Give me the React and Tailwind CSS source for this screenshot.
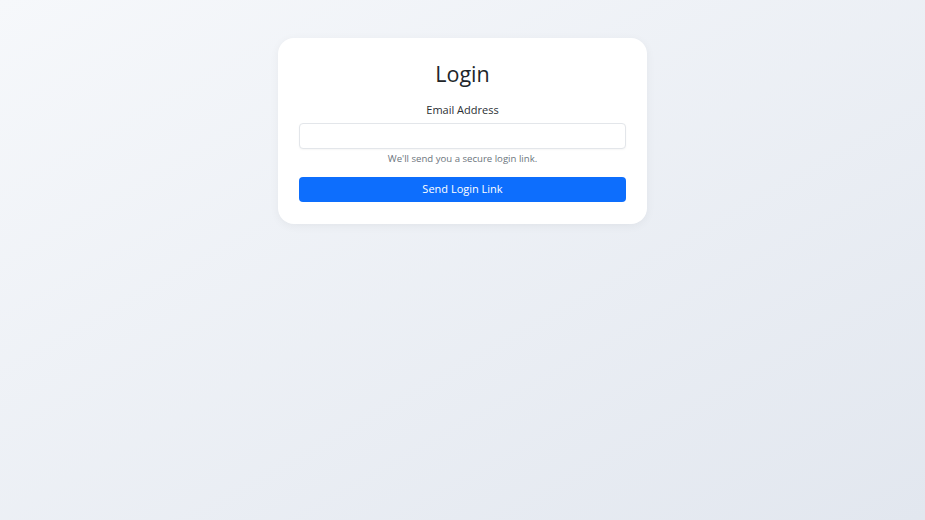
import React from 'react'

const App = () => {
  return (
    <div className="min-h-[520px] w-full bg-gradient-to-br from-[#f6f8fb] to-[#e2e7ef] font-['Open_Sans',sans-serif] pt-[38px]">
      <div className="mx-auto w-[369px] rounded-2xl bg-white px-[21px] pt-[22px] pb-[22px] shadow-[0_2px_10px_rgba(0,0,0,0.05)]">
        {/* Title */}
        <h1 className="text-center text-[21.5px] leading-[27px] text-[#212529]">Login</h1>

        <form onSubmit={(e) => e.preventDefault()} className="mt-[14px] flex flex-col">
          <label htmlFor="email" className="text-center text-[11px] leading-[17px] text-[#2b2f33]">
            Email Address
          </label>
          <input
            id="email"
            type="email"
            className="mt-[5px] h-[26px] w-full rounded-[4px] border border-[#e3e6ea] bg-white px-2 text-[12px] outline-none shadow-[0_1px_2px_rgba(0,0,0,0.04)]"
          />
          <p className="mt-[2px] text-center text-[9.6px] leading-[15px] text-[#6c757d]">
            We'll send you a secure login link.
          </p>
          <button
            type="submit"
            className="mt-[11px] h-[25px] w-full rounded-[4px] bg-[#0d6efd] text-[11px] text-white"
          >
            Send Login Link
          </button>
        </form>
      </div>
    </div>
  )
}

export default App
